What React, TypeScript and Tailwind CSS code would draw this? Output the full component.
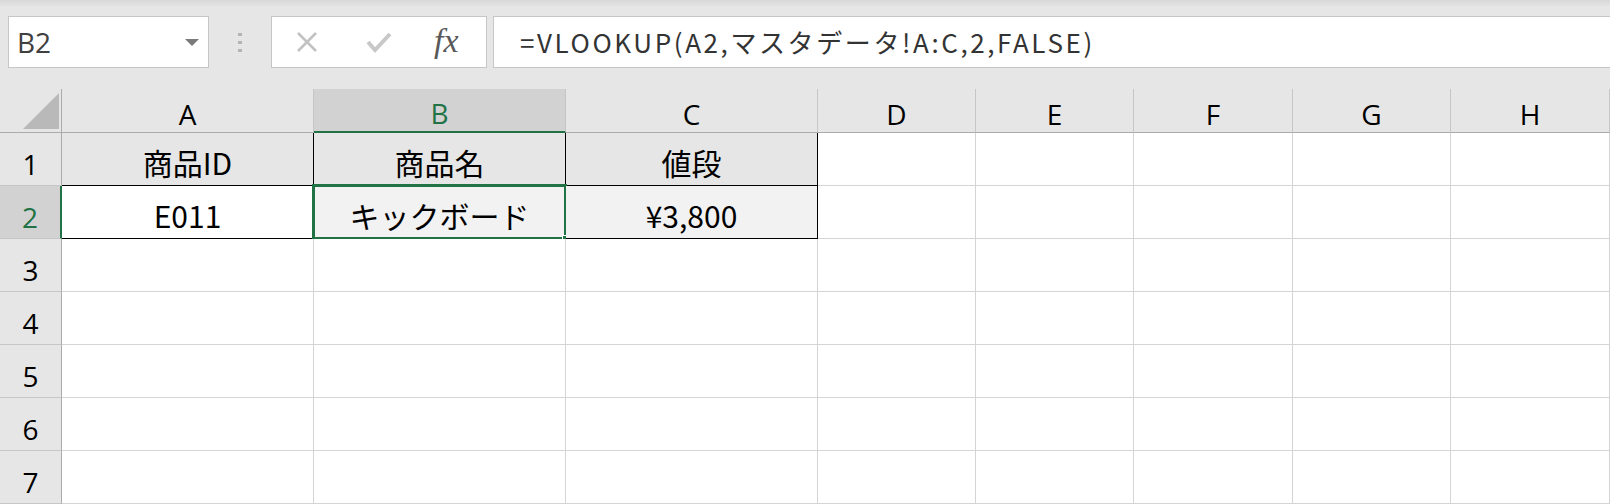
import clsx from 'clsx'

const uiFont = 'font-["Open_Sans","Noto_Sans",sans-serif]'
const cellFont = 'font-["Noto_Sans_CJK_JP","Noto_Sans",sans-serif]'

const columns = ['A', 'B', 'C', 'D', 'E', 'F', 'G', 'H']

type Cell = { text?: string; fill?: string; boxed?: boolean }

// rows 1..7, columns A..H
const sheet: Cell[][] = [
  [
    { text: '商品ID', fill: 'bg-[#e7e6e6]', boxed: true },
    { text: '商品名', fill: 'bg-[#e7e6e6]', boxed: true },
    { text: '値段', fill: 'bg-[#e7e6e6]', boxed: true },
  ],
  [
    { text: 'E011', fill: 'bg-white', boxed: true },
    { text: 'キックボード', fill: 'bg-[#f2f2f2]', boxed: true },
    { text: '¥3,800', fill: 'bg-[#f2f2f2]', boxed: true },
  ],
]

function NameBox() {
  return (
    <div className="ml-[8px] mt-[16px] w-[201px] h-[52px] bg-white border border-[#c6c6c6] flex items-center justify-between pl-[8px] pr-[9px]">
      <span className={clsx(uiFont, 'text-[28px] text-[#404040] leading-none')}>B2</span>
      <svg width="14" height="7" viewBox="0 0 14 7">
        <path d="M0 0 L14 0 L7 7 Z" fill="#7a7a7a" />
      </svg>
    </div>
  )
}

function Grip() {
  return (
    <div className="w-[62px] h-[52px] mt-[16px] flex flex-col items-center justify-center gap-[5px]">
      <div className="w-[4px] h-[3px] bg-[#b4b4b4]" />
      <div className="w-[4px] h-[3px] bg-[#b4b4b4]" />
      <div className="w-[4px] h-[3px] bg-[#b4b4b4]" />
    </div>
  )
}

function FxBox() {
  return (
    <div className="mt-[16px] w-[216px] h-[52px] bg-white border border-[#c6c6c6] flex items-center">
      <svg className="ml-[24px]" width="22" height="22" viewBox="0 0 22 22">
        <path d="M2 2 L20 20 M20 2 L2 20" stroke="#c2c2c2" strokeWidth="2.6" />
      </svg>
      <svg className="ml-[48px]" width="26" height="22" viewBox="0 0 26 22">
        <path d="M2 11 L9 19 L24 3" stroke="#c8c8c8" strokeWidth="4" fill="none" />
      </svg>
      <span className="ml-[42px] font-['Liberation_Serif',serif] italic text-[34px] text-[#595959] leading-none pb-[2px]">
        fx
      </span>
    </div>
  )
}

function FormulaBox() {
  return (
    <div className="ml-[6px] mt-[16px] flex-1 h-[52px] bg-white border border-r-0 border-[#c6c6c6] flex items-center pl-[26px]">
      <span className={clsx(cellFont, 'text-[26px] tracking-[2.6px] text-[#333333] leading-none')}>
        =VLOOKUP(A2,マスタデータ!A:C,2,FALSE)
      </span>
    </div>
  )
}

export default function App() {
  return (
    <div className="w-[1610px] h-[504px] overflow-hidden bg-white">
      <div className="h-[89px] flex items-start bg-[linear-gradient(#d8d8d8,#e6e6e6_7px)]">
        <NameBox />
        <Grip />
        <FxBox />
        <FormulaBox />
      </div>

      <div className="grid grid-cols-[62px_252px_252px_252px_158px_158px_159px_158px_159px] grid-rows-[44px_repeat(7,53px)]">
        <div className="bg-[#e6e6e6] border-r border-b border-[#ababab] flex items-end justify-end pr-[2px] pb-[3px]">
          <svg width="36" height="36" viewBox="0 0 36 36">
            <path d="M0 36 L36 0 L36 36 Z" fill="#b9b9b9" />
          </svg>
        </div>
        {columns.map((c) => {
          const active = c === 'B'
          return (
            <div
              key={c}
              className={clsx(
                uiFont,
                'flex items-center justify-center pt-[6px] text-[28px] leading-none border-r',
                active
                  ? 'bg-[#d2d2d2] text-[#217346] border-[#c6c6c6] border-b-2 border-b-[#217346]'
                  : 'bg-[#e6e6e6] text-black border-[#c6c6c6] border-b border-b-[#ababab]',
              )}
            >
              {c}
            </div>
          )
        })}

        {[1, 2, 3, 4, 5, 6, 7].map((r) => {
          const rowCells = sheet[r - 1] ?? []
          const activeRow = r === 2
          return [
            <div
              key={`h${r}`}
              className={clsx(
                uiFont,
                'flex items-center justify-center pt-[10px] text-[28px] leading-none border-b border-b-[#c6c6c6]',
                activeRow
                  ? 'bg-[#d2d2d2] text-[#217346] border-r-2 border-r-[#217346]'
                  : 'bg-[#e6e6e6] text-black border-r border-r-[#ababab]',
              )}
            >
              {r}
            </div>,
            ...columns.map((c, i) => {
              const cell = rowCells[i]
              const selected = r === 2 && c === 'B'
              return (
                <div
                  key={`${c}${r}`}
                  className={clsx(
                    'relative border-r border-b flex items-center justify-center',
                    cell?.boxed ? 'border-black' : 'border-[#d4d4d4]',
                    cell?.fill ?? 'bg-white',
                  )}
                >
                  {cell?.text && (
                    <span className={clsx(cellFont, 'text-[30px] text-black leading-none pt-[6px]')}>
                      {cell.text}
                    </span>
                  )}
                  {selected && (
                    <>
                      <div className="absolute -left-[2px] -top-[2px] -right-[2px] -bottom-[2px] border-[3px] border-[#217346]" />
                      <div className="absolute -right-[5px] -bottom-[5px] w-[8px] h-[8px] bg-[#217346] border border-white" />
                    </>
                  )}
                </div>
              )
            }),
          ]
        })}
      </div>
    </div>
  )
}
